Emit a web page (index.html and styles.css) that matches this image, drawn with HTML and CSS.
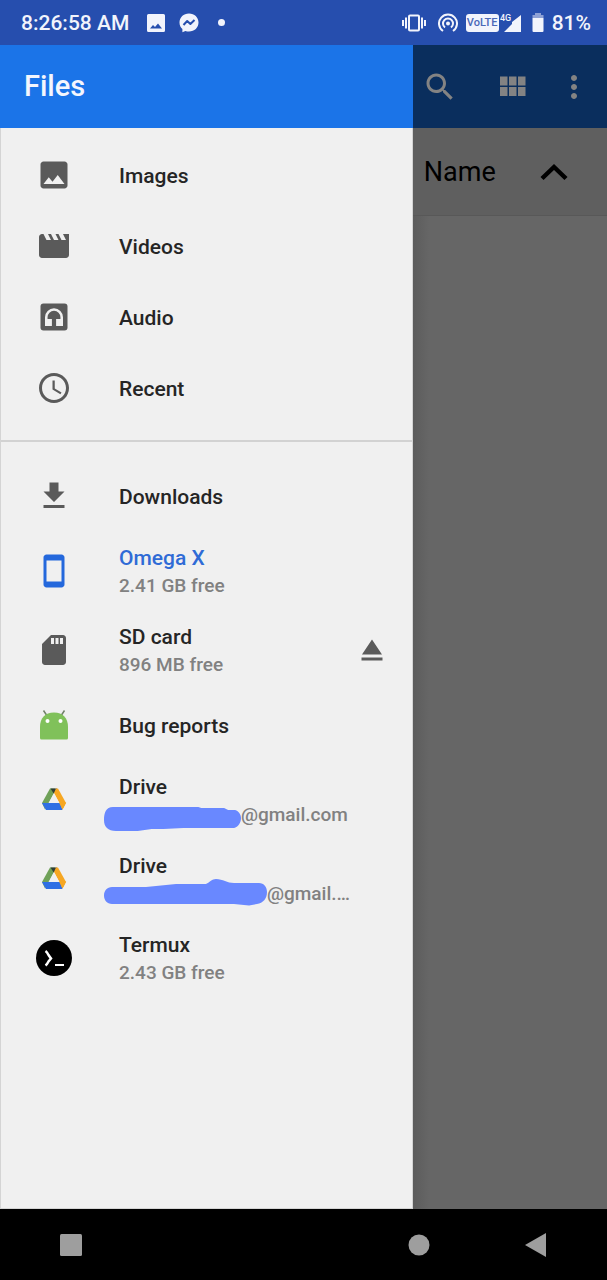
FILE: index.html
```html
<!DOCTYPE html>
<html lang="en">
<head>
<meta charset="utf-8">
<meta name="viewport" content="width=device-width, initial-scale=1">
<title>Files</title>
<link rel="stylesheet" href="styles.css">
</head>
<body>
<div class="screen">
  <header class="status">
    <div class="status-group status-left">
      <time class="clock">8:26:58 AM</time>
      <svg class="ic-picture" viewBox="0 0 18 18" aria-hidden="true"><path fill="#f2f4fc" fill-rule="evenodd" d="M1.500 0h15a1.500 1.500 0 0 1 1.500 1.500v15a1.500 1.500 0 0 1-1.500 1.500h-15A1.500 1.500 0 0 1 0 16.500v-15A1.500 1.500 0 0 1 1.500 0zM3 14.500h12l-4-5-3 3.500-2-2z"/></svg>
      <svg class="ic-messenger" viewBox="0 0 20 20" aria-hidden="true"><path fill="#f2f4fc" d="M10 .5C4.500.5.500 4.400.500 9.500c0 2.700 1.100 4.900 2.900 6.500v3.300l3-1.300c1.100.4 2.300.5 3.600.5 5.500 0 9.500-3.900 9.500-9S15.500.500 10 .500z"/><path fill="none" stroke="#264eae" stroke-width="2" stroke-linejoin="round" d="M4.500 12l3.700-4 3.200 3 4.100-4"/></svg>
      <span class="dot"></span>
    </div>
    <div class="status-group status-right">
      <svg class="ic-vibrate" viewBox="0 0 24 18" aria-hidden="true"><g fill="none" stroke="#f2f4fc" stroke-width="2"><rect x="7" y="1.500" width="10" height="15" rx="1"/><path d="M4 3.500v11M1 6v6M20 3.500v11M23 6v6"/></g></svg>
      <svg class="ic-hotspot" viewBox="0 0 20 20" aria-hidden="true"><g fill="none" stroke="#f2f4fc" stroke-width="2"><path d="M5 18A9 9 0 1 1 15 18"/><path d="M7 14.500a5 5 0 1 1 6 0"/></g><circle cx="10" cy="10.500" r="2" fill="#f2f4fc"/></svg>
      <div class="network">
        <span class="volte">VoLTE</span>
        <svg class="ic-signal" viewBox="0 0 22 20" aria-hidden="true"><path fill="#f2f4fc" d="M21 2v17H4l8-8V9z"/><path fill="#264eae" d="M0 0h12v9H0z"/><text x="0" y="8" class="gen">4G</text></svg>
      </div>
      <svg class="ic-battery" viewBox="0 0 12 20" aria-hidden="true"><path fill="#8da0d5" d="M3 0h6v2h2.500v3H.500V2H3z"/><path fill="#f2f4fc" d="M.500 5h11v13a1 1 0 0 1-1 1h-9a1 1 0 0 1-1-1z"/></svg>
      <span class="percent">81%</span>
    </div>
  </header>

  <div class="body">
    <aside class="drawer">
      <h1 class="drawer-title">Files</h1>
      <nav class="roots">
        <ul class="list">
          <li class="row"><a class="root" href="#images">
            <svg class="icon" viewBox="0 0 24 24" aria-hidden="true"><path d="M21 19V5c0-1.100-.9-2-2-2H5c-1.100 0-2 .9-2 2v14c0 1.100.9 2 2 2h14c1.100 0 2-.9 2-2zM8.500 13.500l2.500 3.010L14.500 12l4.500 6H5l3.500-4.500z"/></svg>
            <span class="name">Images</span></a></li>
          <li class="row"><a class="root" href="#videos">
            <svg class="icon" viewBox="0 0 24 24" aria-hidden="true"><path d="M18 4l2 4h-3l-2-4h-2l2 4h-3l-2-4H8l2 4H7L5 4H4c-1.100 0-1.990.9-1.990 2L2 18c0 1.100.9 2 2 2h16c1.100 0 2-.9 2-2V4h-4z"/></svg>
            <span class="name">Videos</span></a></li>
          <li class="row"><a class="root" href="#audio">
            <svg class="icon" viewBox="0 0 24 24" aria-hidden="true"><path d="M5 3h14a2 2 0 0 1 2 2v14a2 2 0 0 1-2 2H5a2 2 0 0 1-2-2V5a2 2 0 0 1 2-2z"/><path fill="#f0f0f0" d="M12 6.200a6 6 0 0 0-6 6V18h4.600v-4.700H7.700v-1.100a4.300 4.300 0 0 1 8.600 0v1.100h-2.900V18H18v-5.800a6 6 0 0 0-6-6z"/></svg>
            <span class="name">Audio</span></a></li>
          <li class="row"><a class="root" href="#recent">
            <svg class="icon" viewBox="0 0 24 24" aria-hidden="true"><path d="M11.990 2C6.470 2 2 6.480 2 12s4.470 10 9.990 10C17.520 22 22 17.520 22 12S17.520 2 11.990 2zM12 20c-4.420 0-8-3.580-8-8s3.580-8 8-8 8 3.580 8 8-3.580 8-8 8zm.500-13H11v6l5.250 3.150.75-1.230-4.500-2.670z"/></svg>
            <span class="name">Recent</span></a></li>
        </ul>
        <hr class="divider">
        <ul class="list">
          <li class="row"><a class="root" href="#downloads">
            <svg class="icon" viewBox="0 0 24 24" aria-hidden="true"><path d="M19 9h-4V3H9v6H5l7 7 7-7zM5 18v2h14v-2H5z"/></svg>
            <span class="name">Downloads</span></a></li>
          <li class="row two-line"><a class="root selected" href="#internal" aria-current="page">
            <svg class="icon" viewBox="0 0 24 24" aria-hidden="true"><path d="M17 1H7c-1.100 0-2 .9-2 2v18c0 1.100.9 2 2 2h10c1.100 0 2-.9 2-2V3c0-1.100-.9-2-2-2zm0 18H7V5h10v14z"/></svg>
            <span class="text"><span class="name">Omega X</span><span class="summary">2.41 GB free</span></span></a></li>
          <li class="row two-line"><a class="root" href="#sd">
            <svg class="icon" viewBox="0 0 24 24" aria-hidden="true"><path d="M18 2h-8L4.020 8 4 20c0 1.100.9 2 2 2h12c1.100 0 2-.9 2-2V4c0-1.100-.9-2-2-2zm-6 6h-2V4h2v4zm3 0h-2V4h2v4zm3 0h-2V4h2v4z"/></svg>
            <span class="text"><span class="name">SD card</span><span class="summary">896 MB free</span></span></a>
            <button class="eject" type="button" aria-label="Eject SD card"><svg class="icon" viewBox="0 0 24 24" aria-hidden="true"><path d="M5 17h14v2H5zm7-12L5.330 15h13.340z"/></svg></button></li>
          <li class="row"><a class="root" href="#bugs">
            <svg class="icon" viewBox="0 0 36 36" aria-hidden="true"><path fill="none" stroke="#71806a" stroke-width="1.500" d="M7.500 3.500l4 6M28.500 3.500l-4 6"/><path fill="#80c15a" d="M4 20C4 11 9 5.500 18 5.500S32 11 32 20v11a1.500 1.500 0 0 1-1.500 1.500h-25A1.500 1.500 0 0 1 4 31z"/><circle cx="11.500" cy="14" r="2" fill="#fff"/><circle cx="24.500" cy="14" r="2" fill="#fff"/></svg>
            <span class="name">Bug reports</span></a></li>
          <li class="row two-line"><a class="root" href="#drive-1">
            <svg class="icon" viewBox="0 0 36 36" aria-hidden="true"><path fill="#6fa158" d="M14 6.500h5L18 11l-5 10-4 6.500L6 21z"/><path fill="#303c38" d="M14.500 6.500h6.500L18 12z"/><path fill="#f6a723" d="M20 6.500h2l8 14.500-3.500 6.500L18 11z"/><path fill="#2f6fe4" d="M6 21h18l2.500 7H10z"/><path fill="#f6a723" d="M23 20.500h7.200l-3.700 7z"/><path fill="#f0f0f0" d="M18 11l5.500 10h-11z"/></svg>
            <span class="text"><span class="name">Drive</span><span class="summary masked"><svg class="mask mask-short" viewBox="0 -5 138 28" aria-hidden="true"><path fill="#6988ff" d="M9 1H95L98 2H121L125 4H132C136 5 138 9 138 12C138 17 135 21 131 22H80L60 23H48L34 25H12C4 25 0 21 0 14C0 7 2 1 9 1z"/></svg>@gmail.com</span></span></a></li>
          <li class="row two-line"><a class="root" href="#drive-2">
            <svg class="icon" viewBox="0 0 36 36" aria-hidden="true"><path fill="#6fa158" d="M14 6.500h5L18 11l-5 10-4 6.500L6 21z"/><path fill="#303c38" d="M14.500 6.500h6.500L18 12z"/><path fill="#f6a723" d="M20 6.500h2l8 14.500-3.500 6.500L18 11z"/><path fill="#2f6fe4" d="M6 21h18l2.500 7H10z"/><path fill="#f6a723" d="M23 20.500h7.200l-3.700 7z"/><path fill="#f0f0f0" d="M18 11l5.500 10h-11z"/></svg>
            <span class="text"><span class="name">Drive</span><span class="summary masked"><svg class="mask mask-long" viewBox="0 2 163 28" aria-hidden="true"><path fill="#6988ff" d="M8 9H42L72 6H102C106 4 108 1 112 1C119 1 123 5 130 5H155C160 5 163 9 163 14C163 21 159 25 153 26L145 27.500L130 26H8C3 26 0 22 0 17.500C0 13 3 9 8 9z"/></svg>@gmail.…</span></span></a></li>
          <li class="row two-line"><a class="root" href="#termux">
            <svg class="icon" viewBox="0 0 36 36" aria-hidden="true"><circle cx="18" cy="18" r="18" fill="#000"/><path fill="none" stroke="#fff" stroke-width="2.500" d="M9.500 11c1.500 1 2 2 3 4l2.500 3.500-2.500 3c-1 2-1.500 3-3 4"/><path fill="none" stroke="#fff" stroke-width="2" d="M19 25h9"/></svg>
            <span class="text"><span class="name">Termux</span><span class="summary">2.43 GB free</span></span></a></li>
        </ul>
      </nav>
    </aside>

    <main class="content">
      <div class="toolbar">
        <button class="tool" type="button" aria-label="Search"><svg class="icon" viewBox="0 0 24 24" aria-hidden="true"><path d="M15.500 14h-.79l-.28-.27C15.410 12.590 16 11.110 16 9.500 16 5.910 13.090 3 9.500 3S3 5.910 3 9.500 5.910 16 9.500 16c1.610 0 3.090-.59 4.230-1.570l.27.28v.79l5 4.990L20.490 19l-4.990-5zm-6 0C7.010 14 5 11.990 5 9.500S7.010 5 9.500 5 14 7.010 14 9.500 11.990 14 9.500 14z"/></svg></button>
        <button class="tool" type="button" aria-label="Grid view"><svg class="icon" viewBox="0 0 24 24" aria-hidden="true"><path d="M4 11h5V5H4v6zm0 7h5v-6H4v6zm6 0h5v-6h-5v6zm6 0h5v-6h-5v6zm-6-7h5V5h-5v6zm6-6v6h5V5h-5z"/></svg></button>
        <button class="tool more" type="button" aria-label="More options"><svg class="icon" viewBox="0 0 24 24" aria-hidden="true"><path d="M12 8c1.100 0 2-.9 2-2s-.9-2-2-2-2 .9-2 2 .9 2 2 2zm0 2c-1.100 0-2 .9-2 2s.9 2 2 2 2-.9 2-2-.9-2-2-2zm0 6c-1.100 0-2 .9-2 2s.9 2 2 2 2-.9 2-2-.9-2-2-2z"/></svg></button>
      </div>
      <button class="sort" type="button">
        <span>Name</span>
        <svg class="chevron" viewBox="0 0 28 18" aria-hidden="true"><path fill="none" stroke="#000" stroke-width="4.500" d="M2 15.500L14 4l12 11.500"/></svg>
      </button>
    </main>
  </div>

  <footer class="navbar">
    <button class="nav" type="button" aria-label="Recent apps"><svg viewBox="0 0 22 24" aria-hidden="true"><rect y="1" width="22" height="22" rx="1.500"/></svg></button>
    <button class="nav home" type="button" aria-label="Home"><svg viewBox="0 0 22 24" aria-hidden="true"><ellipse cx="11" cy="12" rx="10.500" ry="10.500"/></svg></button>
    <button class="nav" type="button" aria-label="Back"><svg viewBox="0 0 22 24" aria-hidden="true"><path d="M0 12L21 0v24z"/></svg></button>
  </footer>
</div>
</body>
</html>
```
FILE: styles.css
```css
* {
  box-sizing: border-box;
}

body {
  margin: 0;
  font-family: Roboto, "Noto Sans", sans-serif;
  font-weight: 500;
}

button {
  display: flex;
  align-items: center;
  margin: 0;
  padding: 0;
  border: 0;
  background: none;
  font: inherit;
  color: inherit;
}

.screen {
  display: grid;
  grid-template-rows: auto 1fr auto;
  min-height: 100vh;
}

/* Status bar */
.status {
  display: flex;
  align-items: center;
  justify-content: space-between;
  height: 45px;
  padding: 0 16px 0 21px;
  background: #264eae;
  color: #f2f4fc;
  font-size: 21px;
}

.status-group {
  display: flex;
  align-items: center;
}

.clock {
  margin-right: 18px;
}

.ic-picture {
  width: 18px;
  height: 18px;
  margin-right: 14px;
}

.ic-messenger,
.ic-hotspot {
  width: 20px;
  height: 20px;
}

.dot {
  width: 7px;
  height: 7px;
  margin-left: 19px;
  border-radius: 50%;
  background: #f2f4fc;
}

.status-right {
  gap: 8px;
}

.ic-vibrate {
  width: 24px;
  height: 18px;
  margin-right: 4px;
}

.network {
  display: flex;
  align-items: center;
  gap: 1px;
}

.volte {
  width: 33px;
  border-radius: 3px;
  background: #f2f4fc;
  color: #4a68b8;
  font-size: 11px;
  line-height: 18px;
  text-align: center;
}

.ic-signal {
  width: 22px;
  height: 20px;
}

.gen {
  fill: #f2f4fc;
  font-size: 9px;
}

.ic-battery {
  width: 12px;
  height: 20px;
  margin-left: 2px;
}

/* Drawer beside the dimmed file list */
.body {
  display: grid;
  grid-template-columns: 68% 32%;
}

.drawer {
  display: flex;
  flex-direction: column;
  background: #f0f0f0;
  color: #252525;
}

.drawer-title {
  margin: 0;
  padding: 0 24px;
  background: #1b74e8;
  color: #f4f6fd;
  font-size: 29px;
  font-weight: 500;
  line-height: 83px;
}

.roots {
  flex: 1;
  padding-top: 12px;
  border: solid #d4d4d4;
  border-width: 0 1px 1px;
}

.list {
  margin: 0;
  padding: 0;
  list-style: none;
}

.row {
  display: flex;
  align-items: center;
  min-height: 71px;
  padding: 0 22px 0 35px;
}

.two-line {
  min-height: 79px;
}

.root {
  display: flex;
  flex: 1;
  align-items: center;
  gap: 47px;
  color: inherit;
  text-decoration: none;
}

.icon {
  flex: none;
  width: 36px;
  height: 36px;
  fill: #5a5a5a;
}

.row .icon {
  margin-bottom: 2px;
}

.name {
  font-size: 21px;
  line-height: 28px;
}

.text {
  display: flex;
  flex-direction: column;
}

.summary {
  color: #818181;
  font-size: 19px;
  line-height: 28px;
}

.selected .name {
  color: #2f6bd6;
}

.selected .icon {
  fill: #2468dc;
}

.masked {
  display: flex;
  align-items: center;
  margin-left: -15px;
}

.mask {
  height: 28px;
  overflow: visible;
}

.mask-short {
  width: 137px;
}

.mask-long {
  width: 163px;
}

.divider {
  height: 2px;
  margin: 16px 0 19px;
  border: 0;
  background: #d2d2d2;
}

/* Dimmed file list */
.content {
  background: linear-gradient(90deg, #5c5c5c, #666 16px);
}

.toolbar {
  display: flex;
  align-items: center;
  height: 83px;
  padding: 0 15px 0 9px;
  background: #0a2e5d;
}

.tool + .tool {
  margin-left: 36px;
}

.toolbar .icon {
  fill: #838383;
}

.toolbar .more {
  margin-left: auto;
}

.sort {
  justify-content: space-between;
  width: 100%;
  height: 88px;
  padding: 0 39px 0 11px;
  border-bottom: 1px solid #585858;
  background: #5f5f5f;
  color: #000;
  font-size: 27px;
  font-weight: 400;
}

.chevron {
  width: 28px;
  height: 18px;
}

/* System navigation */
.navbar {
  display: flex;
  align-items: center;
  gap: 95px;
  height: 71px;
  padding: 0 60px;
  background: #000;
}

.nav svg {
  width: 22px;
  height: 24px;
  fill: #9e9e9e;
}

.home {
  margin-left: auto;
}
```
